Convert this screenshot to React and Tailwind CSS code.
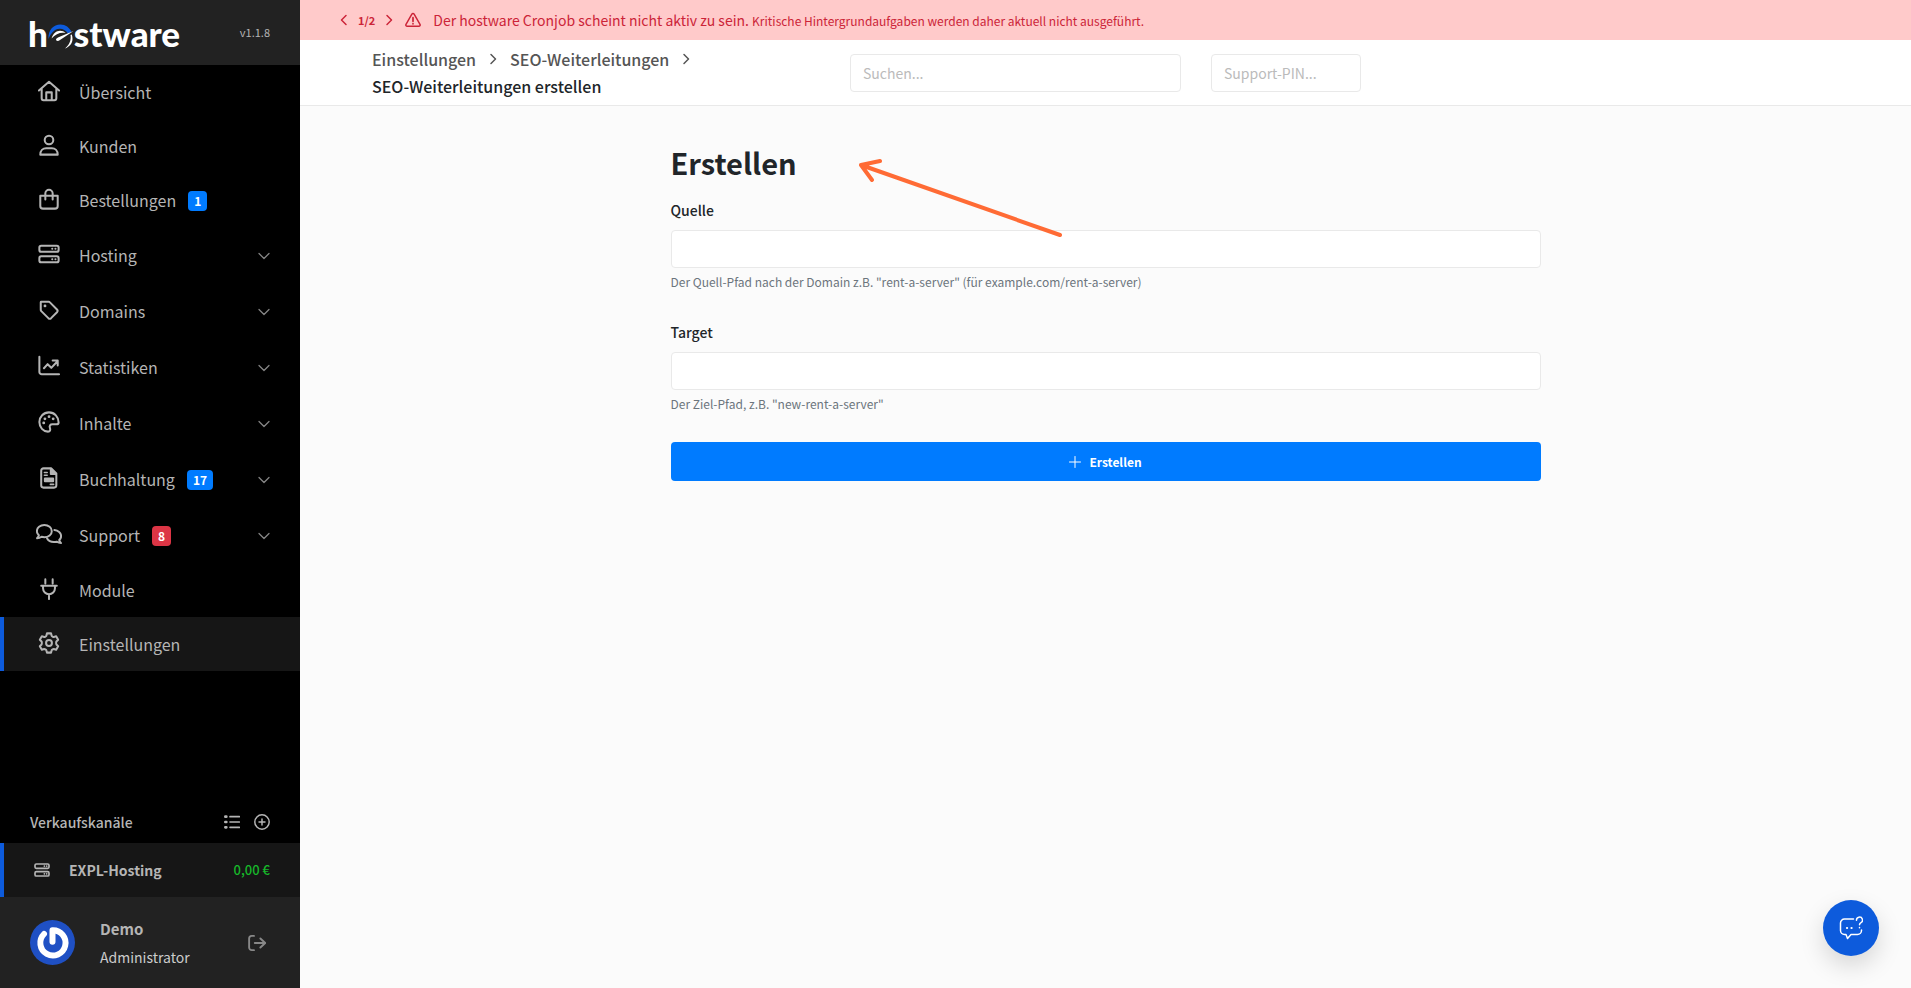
import clsx from 'clsx';

const ICONS = {
	home: (
		<path d="M1 11.500 12 2l11 9.500M4 9.500v10.500a2 2 0 0 0 2 2h12a2 2 0 0 0 2-2V9.500M9 22v-8.500h6V22" />
	),
	user: (
		<>
			<circle cx="12" cy="6.500" r="4.700" />
			<path d="M2.500 22.500c0-4.200 2.800-7 6.400-7h6.200c3.600 0 6.400 2.800 6.400 7z" />
		</>
	),
	bag: (
		<path d="M2.500 8.500h19V19.500a3 3 0 0 1-3 3h-13a3 3 0 0 1-3-3zM8 12.500V6a4 4 0 0 1 8 0v6.500" />
	),
	server: (
		<>
			<rect x="1.500" y="3" width="21" height="6.500" rx="2" />
			<rect x="1.500" y="14.500" width="21" height="6.500" rx="2" />
			<path d="M15.500 6.200h.1M19 6.200h.1M15.500 17.800h.1M19 17.800h.1" />
		</>
	),
	tag: (
		<>
			<path d="M3 3.500v8.200c0 .6.2 1.100.6 1.500l7.700 7.700a2.200 2.200 0 0 0 3 0l6.400-6.400a2.200 2.200 0 0 0 0-3L13 3.700a2 2 0 0 0-1.400-.7H3.500a.5.500 0 0 0-.5.500z" />
			<path d="M7.600 7.600h.1" strokeWidth="3" />
		</>
	),
	chart: (
		<path d="M1.500 2v16.500a2.500 2.500 0 0 0 2.500 2.500h19M6.500 14.500l4-4.500 4 4 7-7.500M16 6h5.500v5.500" />
	),
	palette: (
		<>
			<path d="M22.500 12.500c0-6-4.500-11-10.500-11S1.500 6.200 1.500 12s4.300 10.500 9.300 10.500c2.500 0 3-2 2.200-4-.9-2.300.3-4 2.700-4h4.300c1.400 0 2.500-.6 2.500-2z" />
			<path d="M6.200 13h.1M7.500 8.500h.1M12 6.200h.1M16.500 8.500h.1" strokeWidth="3" />
		</>
	),
	invoice: (
		<>
			<path d="M6 1.500h8.500l5.500 5.500v13a2.500 2.500 0 0 1-2.500 2.500H6A2.500 2.500 0 0 1 3.500 20V4A2.500 2.500 0 0 1 6 1.500z" />
			<path d="M14 2v5.500h5.500z" fill="currentColor" />
			<path d="M7 6h3M7 9h3M13.500 19H17" strokeWidth="1.800" />
			<path d="M7.500 12.500h9v3h-9z" fill="currentColor" />
		</>
	),
	chats: (
		<>
			<path d="M9.300 2C4.600 2 1 5 1 8.800c0 1.800.8 3.400 2.200 4.600-.3 1.200-1.100 2.300-2 3.300 2 0 3.700-.7 5-1.600 1 .3 2 .5 3.100.5 4.700 0 8.300-3 8.300-6.800S14 2 9.300 2z" />
			<path d="M20.500 7.600c4.200.3 7.500 3.200 7.500 6.700 0 1.800-.8 3.300-2.100 4.500.3 1.200 1.100 2.300 2 3.300-2 0-3.600-.7-4.900-1.500-1 .3-2 .4-3.100.4-3.400 0-6.300-1.700-7.500-4" />
		</>
	),
	plug: (
		<path d="M8 1.500V6M16 1.500V6M3.500 8.500h17M5.500 8.500v2.700a6.500 6.500 0 0 0 13 0V8.500M12 17.700V23" />
	),
	gear: (
		<>
			<path d="M9.800 1.500h4.400l.7 2.600c.1.500 1.800 1.400 2.300 1.300l2.600-.7L22 8.500l-1.900 1.900c-.4.400-.4 2.800 0 3.200l1.900 1.900-2.200 3.800-2.600-.7c-.5-.1-2.200.8-2.300 1.300l-.7 2.600H9.800l-.7-2.600c-.1-.5-1.800-1.400-2.300-1.300l-2.600.7L2 15.500l1.900-1.900c.4-.4.4-2.800 0-3.200L2 8.500l2.200-3.800 2.600.7c.5.1 2.200-.8 2.300-1.300z" />
			<circle cx="12" cy="12" r="3.200" />
		</>
	),
	list: (
		<>
			<path d="M9 4h14M9 12h14M9 20h14" />
			<path d="M2 4h1.500M2 12h1.500M2 20h1.500" strokeWidth="4" />
		</>
	),
	plusCircle: (
		<>
			<circle cx="12" cy="12" r="10.800" />
			<path d="M12 7.500v9M7.500 12h9" />
		</>
	),
	logout: (
		<path d="M8 2.500H5a3.500 3.500 0 0 0-3.500 3.500v12A3.500 3.500 0 0 0 5 21.500h3M9 12h14M16.500 6l6.500 6-6.500 6" />
	),
	warning: (
		<>
			<path d="M10.300 3.200a2 2 0 0 1 3.400 0l8.800 15.300a2 2 0 0 1-1.700 3H3.200a2 2 0 0 1-1.700-3z" />
			<path d="M12 8.500v5.500M12 17.600v.2" strokeWidth="2.600" />
		</>
	),
	left: <path d="M16 3 7 12l9 9" />,
	right: <path d="m8 3 9 9-9 9" />,
	down: <path d="m2 7 10 10L22 7" />,
	plus: <path d="M12 1v22M1 12h22" />,
	question: (
		<>
			<path d="M14.500 3H5.500a4 4 0 0 0-4 4v7.500a4 4 0 0 0 4 4H7l1.500 4 3.500-4h6.500a4 4 0 0 0 4-4V14" />
			<path d="M17.500 4.300a3 3 0 1 1 4.500 2.400c-1 .6-1.500 1.100-1.500 2.100M20.500 11.600v.1" />
			<path d="M8 12h.1M12.500 12h.1" strokeWidth="2.200" />
		</>
	),
};

function Icon({ name, className, stroke = 2, viewBox = '0 0 24 24' }) {
	return (
		<svg
			viewBox={viewBox}
			fill="none"
			stroke="currentColor"
			strokeWidth={stroke}
			strokeLinecap="round"
			strokeLinejoin="round"
			aria-hidden="true"
			className={clsx('shrink-0', className)}
		>
			{ICONS[name]}
		</svg>
	);
}

const NAV = [
	{ label: 'Übersicht', icon: 'home' },
	{ label: 'Kunden', icon: 'user' },
	{ label: 'Bestellungen', icon: 'bag', badge: 1 },
	{ label: 'Hosting', icon: 'server', sub: true },
	{ label: 'Domains', icon: 'tag', sub: true },
	{ label: 'Statistiken', icon: 'chart', sub: true },
	{ label: 'Inhalte', icon: 'palette', sub: true },
	{ label: 'Buchhaltung', icon: 'invoice', badge: 17, sub: true },
	{ label: 'Support', icon: 'chats', badge: 8, danger: true, sub: true },
	{ label: 'Module', icon: 'plug' },
	{ label: 'Einstellungen', icon: 'gear', active: true },
];

function Logo() {
	return (
		<a
			href="#"
			className="flex items-center font-['Lato'] text-[35px] leading-8 font-black text-white"
		>
			<span className="-ml-0.5">h</span>
			<svg viewBox="0 0 26 25" className="mt-2 w-[26px] shrink-0" aria-hidden="true">
				<path d="M.5 15C0 6 5.500.6 12.500.6c5 0 9 3 11 7.400l-3.500 1.500C17.500 6 14.500 4.600 11.500 4.800 6.500 5 3 9 .5 15z" fill="#0d5bdc" />
				<path d="M3.500 14.500C5 9.500 8.500 6.800 12 6.800c2.300 0 4.200.8 5.500 2.300-5-1-9.500.6-14 5.400z" fill="#fff" />
				<path d="M25.500 7 10.500 13.200c-2 .9-3 2-2.300 3.100.8 1.100 2.300.8 3.800-.2z" fill="#fff" />
				<path d="M22.500 11c.8 5.500-1 9.500-5.500 13.600 4-1.600 7.500-5 7.500-9.600 0-1.600-.2-3-.7-4.400z" fill="#fff" />
			</svg>
			<span>stware</span>
		</a>
	);
}

function NavItem({ item }) {
	return (
		<a
			href="#"
			className={clsx(
				'flex items-center border-l-4 pr-[30px] pl-[30px] text-base',
				item.sub ? 'h-14' : 'h-[54px]',
				item.active ? 'border-[#0d5bdc] bg-[#161616]' : 'border-transparent'
			)}
		>
			<span className="mr-[15px] flex w-[30px] justify-center">
				<Icon
					name={item.icon}
					stroke={2.2}
					viewBox={item.icon === 'chats' ? '0 0 29 24' : '0 0 24 24'}
					className={clsx('-mt-0.5 h-[22px]', item.icon === 'chats' ? 'w-[26px]' : 'w-[22px]')}
				/>
			</span>
			{item.label}
			{item.badge && (
				<span
					className={clsx(
						'mt-0.5 ml-3 rounded px-1.5 text-xs leading-5 font-bold text-white',
						item.danger ? 'bg-[#dc3545]' : 'bg-[#007bff]'
					)}
				>
					{item.badge}
				</span>
			)}
			{item.sub && (
				<Icon name="down" stroke={2.5} className="mt-0.5 ml-auto size-3 text-[#858585]" />
			)}
		</a>
	);
}

function Sidebar() {
	return (
		<aside className="flex w-[300px] shrink-0 flex-col bg-black text-[#b5b5b5]">
			<div className="flex h-[65px] items-center justify-between bg-[#222] px-[30px]">
				<Logo />
				<span className="text-[11px]">v1.1.8</span>
			</div>
			<nav>
				{NAV.map((item) => (
					<NavItem key={item.label} item={item} />
				))}
			</nav>
			<div className="mt-auto">
				<div className="flex h-[42px] items-center px-[30px] text-sm font-medium">
					Verkaufskanäle
					<button type="button" aria-label="Kanäle anzeigen" className="ml-auto">
						<Icon name="list" stroke={2.5} className="size-4" />
					</button>
					<button type="button" aria-label="Kanal anlegen" className="ml-3.5">
						<Icon name="plusCircle" stroke={2.2} className="size-4" />
					</button>
				</div>
				<a
					href="#"
					className="flex h-[54px] items-center border-l-4 border-[#0d5bdc] bg-[#161616] pr-[30px] pl-[30px] text-sm font-bold"
				>
					<Icon name="server" stroke={2.5} className="mr-[19px] size-4" />
					EXPL-Hosting
					<span className="ml-auto text-[13px] font-medium text-[#16b82a]">0,00 €</span>
				</a>
				<div className="flex h-[91px] items-center bg-[#222] px-[30px]">
					<svg viewBox="0 0 45 45" className="mr-[25px] size-[45px]" aria-hidden="true">
						<circle cx="22.500" cy="22.500" r="22.500" fill="#1f50c4" />
						<path
							d="M14 14a12.600 12.600 0 1 0 8.500-3.700v11.500"
							fill="none"
							stroke="#fff"
							strokeWidth="6"
							strokeLinecap="round"
							strokeLinejoin="round"
						/>
					</svg>
					<div>
						<div className="text-[15px] leading-7 font-bold">Demo</div>
						<div className="text-sm leading-7 text-[#ccc]">Administrator</div>
					</div>
					<button type="button" aria-label="Abmelden" className="mr-1 ml-auto text-[#888]">
						<Icon name="logout" stroke={2.5} className="size-[18px]" />
					</button>
				</div>
			</div>
		</aside>
	);
}

function Notice() {
	return (
		<div className="flex h-10 items-center bg-[#ffcaca] px-[38px] text-[#cc2438]">
			<button type="button" aria-label="Zurück">
				<Icon name="left" stroke={3} className="size-3" />
			</button>
			<span className="mx-2 text-[11px] font-bold">1/2</span>
			<button type="button" aria-label="Weiter">
				<Icon name="right" stroke={3} className="size-3" />
			</button>
			<Icon name="warning" stroke={2.2} className="mr-3 ml-2.5 size-4" />
			<p className="text-sm">
				Der hostware Cronjob scheint nicht aktiv zu sein.{' '}
				<span className="text-xs">
					Kritische Hintergrundaufgaben werden daher aktuell nicht ausgeführt.
				</span>
			</p>
		</div>
	);
}

function Topbar() {
	return (
		<header className="flex h-[66px] items-center border-b border-[#e9e9e9] bg-white pr-8 pl-[72px]">
			<nav
				aria-label="Breadcrumb"
				className="w-[478px] text-base leading-[27px] font-medium text-[#555]"
			>
				<div className="flex items-center">
					<a href="#">Einstellungen</a>
					<Icon name="right" stroke={3} className="mx-[11px] size-3" />
					<a href="#">SEO-Weiterleitungen</a>
					<Icon name="right" stroke={3} className="mx-[11px] size-3" />
				</div>
				<div className="text-[#212529]">SEO-Weiterleitungen erstellen</div>
			</nav>
			<input
				type="search"
				aria-label="Suchen"
				placeholder="Suchen..."
				className="h-[38px] w-[331px] rounded border border-[#e9e9e9] px-3 text-sm placeholder:text-[#bbb]"
			/>
			<input
				type="text"
				aria-label="Support-PIN"
				placeholder="Support-PIN..."
				className="ml-[30px] h-[38px] w-[150px] rounded border border-[#e9e9e9] px-3 text-sm placeholder:text-[#bbb]"
			/>
		</header>
	);
}

function Field({ id, label, help }) {
	return (
		<div className="mb-7">
			<label htmlFor={id} className="mb-2 block text-sm leading-6 font-medium">
				{label}
			</label>
			<input
				id={id}
				type="text"
				className="block h-[38px] w-full rounded border border-[#e9e9e9] bg-white px-3 text-sm"
			/>
			<p className="mt-1 text-xs leading-5 text-[#6c757d]">{help}</p>
		</div>
	);
}

export default function App() {
	return (
		<div className="flex min-h-screen bg-[#fbfbfb] font-['Noto_Sans_CJK_SC',sans-serif] text-[#212529]">
			<Sidebar />
			<div className="min-w-0 flex-1">
				<Notice />
				<Topbar />
				<main className="relative mx-auto max-w-[870px] pt-8">
					<h1 className="mb-3 text-[29px] leading-[48px] font-bold">Erstellen</h1>
					<form>
						<Field
							id="source"
							label="Quelle"
							help={'Der Quell-Pfad nach der Domain z.B. "rent-a-server" (für example.com/rent-a-server)'}
						/>
						<Field id="target" label="Target" help={'Der Ziel-Pfad, z.B. "new-rent-a-server"'} />
						<button
							type="button"
							className="flex h-[39px] w-full items-center justify-center gap-2 rounded bg-[#007bff] text-xs font-bold text-white"
						>
							<Icon name="plus" className="size-3" />
							Erstellen
						</button>
					</form>
					<svg
						viewBox="0 0 206 82"
						fill="none"
						stroke="#ff6b35"
						strokeWidth="4"
						strokeLinecap="round"
						strokeLinejoin="round"
						aria-hidden="true"
						className="pointer-events-none absolute top-[51px] left-[187px] w-[206px]"
					>
						<path d="M202 78 3 8M22 4 3 8l11 15" />
					</svg>
				</main>
			</div>
			<button
				type="button"
				aria-label="Hilfe"
				className="fixed right-8 bottom-8 flex size-14 items-center justify-center rounded-full bg-[#0d5bdc] text-white shadow-[0_10px_24px_rgba(0,0,0,0.15)]"
			>
				<Icon name="question" stroke={1.5} className="size-6" />
			</button>
		</div>
	);
}
